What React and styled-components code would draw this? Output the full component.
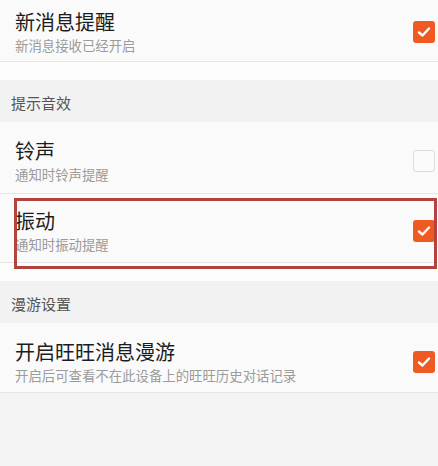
import React from "react";
import styled, { createGlobalStyle } from "styled-components";

const GlobalStyle = createGlobalStyle`
  html, body {
    margin: 0;
    padding: 0;
    background: #f4f4f4;
  }
  body {
    font-family: "Noto Sans CJK SC", "Noto Sans", sans-serif;
  }
`;

const Page = styled.div`
  width: 438px;
  min-height: 466px;
  background: #f4f4f4;
  display: flex;
  flex-direction: column;
`;

const Row = styled.div`
  position: relative;
  height: ${(p) => p.$height}px;
  box-sizing: border-box;
  padding: ${(p) => p.$top}px 3px 0 15px;
  display: flex;
  align-items: center;
  justify-content: space-between;
  background: #fafafa;
  border-bottom: 1px solid #e6e6e6;

  ${(p) =>
    p.$highlight &&
    `
    &::after {
      content: "";
      position: absolute;
      top: 4px;
      bottom: -7px;
      left: 14px;
      right: 1px;
      border: 3px solid #b3433f;
      pointer-events: none;
    }
  `}
`;

const Texts = styled.div`
  display: flex;
  flex-direction: column;
`;

const Title = styled.div`
  font-size: 20px;
  line-height: 24px;
  color: #1c1c1c;
`;

const Description = styled.div`
  margin-top: 2px;
  font-size: 13.4px;
  line-height: 18px;
  color: #9b9b9b;
`;

const Gap = styled.div`
  height: 18px;
  background: #fdfdfd;
`;

const SectionHeader = styled.div`
  height: 42px;
  box-sizing: border-box;
  padding: 2px 0 0 11px;
  display: flex;
  align-items: center;
  background: #f2f2f2;
  font-size: 15px;
  color: #555;
`;

const Box = styled.div`
  width: 22px;
  height: 22px;
  box-sizing: border-box;
  border-radius: 3px;
  display: flex;
  align-items: center;
  justify-content: center;
  background: ${(p) => (p.$checked ? "#ee5a22" : "#fbfbfb")};
  border: ${(p) => (p.$checked ? "none" : "1px solid #dcdcdc")};
`;

const Checkbox = ({ checked }) => (
  <Box $checked={checked}>
    {checked && (
      <svg width="14" height="12" viewBox="0 0 14 12">
        <polyline
          points="2,6.5 5.5,9.5 12,2.5"
          fill="none"
          stroke="#fff"
          strokeWidth="2.4"
          strokeLinecap="round"
          strokeLinejoin="round"
        />
      </svg>
    )}
  </Box>
);

const SettingRow = ({ title, desc, checked, height = 70, top = 8, highlight }) => (
  <Row $height={height} $top={top} $highlight={highlight}>
    <Texts>
      <Title>{title}</Title>
      <Description>{desc}</Description>
    </Texts>
    <Checkbox checked={checked} />
  </Row>
);

const App = () => (
  <Page>
    <GlobalStyle />
    <SettingRow title="新消息提醒" desc="新消息接收已经开启" checked height={62} top={2} />
    <Gap />
    <SectionHeader>提示音效</SectionHeader>
    <SettingRow title="铃声" desc="通知时铃声提醒" height={72} top={6} />
    <SettingRow title="振动" desc="通知时振动提醒" checked height={69} top={6} highlight />
    <Gap />
    <SectionHeader>漫游设置</SectionHeader>
    <SettingRow title="开启旺旺消息漫游" desc="开启后可查看不在此设备上的旺旺历史对话记录" checked height={70} top={8} />
  </Page>
);

export default App;
